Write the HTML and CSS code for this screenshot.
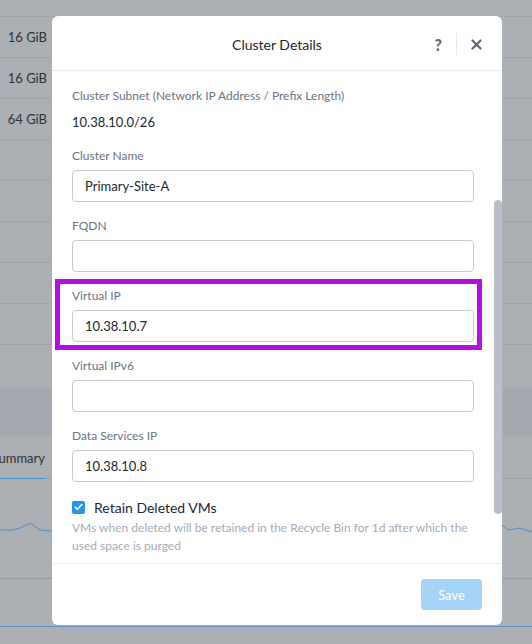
FILE: index.html
```html
<!DOCTYPE html>
<html>
<head>
<meta charset="utf-8">
<link rel="stylesheet" href="styles.css">
</head>
<body>
<div class="page">
  <div class="rows">
    <div class="row first">
      <span class="c-mem">1 GiB</span>
      <span class="c-use">12.75 GiB / 50 GiB</span>
      <span class="c-p1">30.37%</span>
      <span class="c-p2">33.32%</span>
    </div>
    <div class="row"><span class="c-mem">16 GiB</span></div>
    <div class="row"><span class="c-mem">16 GiB</span></div>
    <div class="row"><span class="c-mem">64 GiB</span></div>
    <div class="row"></div>
    <div class="row"></div>
    <div class="row"></div>
    <div class="row"></div>
    <div class="row"></div>
  </div>
  <div class="gap"></div>
  <div class="band"></div>
  <div class="tabs"><span class="tab">Summary</span></div>
  <div class="chart">
    <svg width="532" height="99" viewBox="0 0 532 99">
      <polyline points="0,51 13,51 20,49 30,44 40,51 52,52 300,52 496,44 502,46 508,51 520,49 532,53" fill="none" stroke="#4a8fcf" stroke-width="1"/>
    </svg>
  </div>
  <div class="line2"></div>
</div>

<div class="modal">
  <div class="m-head">
    <div class="m-title">Cluster Details</div>
    <div class="m-actions">
      <span class="m-help">?</span>
      <span class="m-sep"></span>
      <span class="m-close">
        <svg width="11" height="11" viewBox="0 0 11 11"><path d="M1.5 1.5 L9.5 9.5 M9.5 1.5 L1.5 9.5" stroke="#5d6979" stroke-width="2.2" stroke-linecap="round"/></svg>
      </span>
    </div>
  </div>
  <div class="m-body">
    <div class="content">
      <div class="field">
        <div class="label">Cluster Subnet (Network IP Address / Prefix Length)</div>
        <div class="static">10.38.10.0/26</div>
      </div>
      <div class="field">
        <div class="label">Cluster Name</div>
        <div class="input">Primary-Site-A</div>
      </div>
      <div class="field">
        <div class="label">FQDN</div>
        <div class="input"></div>
      </div>
      <div class="field hl">
        <div class="label">Virtual IP</div>
        <div class="input">10.38.10.7</div>
        <div class="highlight"></div>
      </div>
      <div class="field">
        <div class="label">Virtual IPv6</div>
        <div class="input"></div>
      </div>
      <div class="field">
        <div class="label">Data Services IP</div>
        <div class="input">10.38.10.8</div>
      </div>
      <div class="check-row">
        <span class="checkbox">
          <svg width="9" height="8" viewBox="0 0 9 8"><path d="M1.2 4.2 L3.4 6.3 L7.8 1.6" fill="none" stroke="#fff" stroke-width="1.6" stroke-linecap="round" stroke-linejoin="round"/></svg>
        </span>
        <span class="check-label">Retain Deleted VMs</span>
      </div>
      <div class="help">VMs when deleted will be retained in the Recycle Bin for 1d after which the used space is purged</div>
    </div>
    <div class="scrollbar"></div>
  </div>
  <div class="m-foot">
    <button class="save">Save</button>
  </div>
</div>
</body>
</html>
```

FILE: styles.css
```css
html, body {
  margin: 0;
  padding: 0;
}
body {
  width: 532px;
  height: 644px;
  overflow: hidden;
  background: #acafb4;
  font-family: "Lato", "Open Sans", sans-serif;
  color: #22272e;
  position: relative;
}
.page {
  margin-top: -24px;
}
.rows {
  display: flex;
  flex-direction: column;
}
.row {
  height: 40px;
  border-bottom: 1px solid #a2a5aa;
  position: relative;
  display: flex;
  align-items: center;
  font-size: 13px;
  color: #2d3137;
}
.row span {
  position: absolute;
}
.c-mem { right: 485px; }
.c-use { left: 120px; }
.c-p1 { left: 285px; }
.c-p2 { left: 390px; }
.first { align-items: flex-end; }
.first span { bottom: 14px; }
.gap {
  height: 42px;
}
.band {
  height: 50px;
  background: #a6a9af;
}
.tabs {
  height: 41px;
  border-bottom: 1px solid #a0a3a8;
  position: relative;
  font-size: 13px;
  color: #2d3137;
}
.tab {
  position: absolute;
  left: 0;
  right: 487px;
  bottom: -1px;
  height: 28px;
  border-bottom: 1px solid #4a8fcf;
  display: flex;
  justify-content: flex-end;
  align-items: flex-start;
}
.chart {
  height: 99px;
  border-bottom: 1px solid #989ba0;
}
.chart svg { display: block; }
.line2 {
  height: 47px;
  border-bottom: 1px solid #5d8fc0;
}

.modal {
  position: absolute;
  left: 52px;
  top: 16px;
  width: 450px;
  height: 609px;
  background: #fff;
  border-radius: 6px;
  display: flex;
  flex-direction: column;
  overflow: hidden;
}
.m-head {
  height: 54px;
  border-bottom: 1px solid #e9ebee;
  display: flex;
  align-items: center;
  justify-content: center;
  position: relative;
  flex: none;
}
.m-title {
  font-size: 14px;
  color: #22272e;
  margin-top: 2px;
}
.m-actions {
  position: absolute;
  right: 20px;
  top: 17px;
  display: flex;
  align-items: center;
  height: 22px;
}
.m-help {
  font-size: 16px;
  font-weight: 900;
  color: #5d6979;
  margin-right: 14px;
}
.m-sep {
  width: 1px;
  height: 22px;
  background: #e6e8eb;
  margin-right: 14px;
}
.m-close {
  display: flex;
  align-items: center;
}
.m-body {
  flex: 1;
  position: relative;
  overflow: hidden;
}
.content {
  padding: 18px 28px 0 20px;
}
.field {
  margin-bottom: 17px;
  position: relative;
}
.label {
  font-size: 12px;
  line-height: 14px;
  color: #6a7485;
  margin-bottom: 7px;
}
.static {
  font-size: 13px;
  line-height: 18px;
  margin-top: 10px;
  margin-bottom: 18px;
  color: #22272e;
}
.input {
  height: 30px;
  border: 1px solid #c5cad3;
  border-radius: 4px;
  padding: 0 12px;
  font-size: 13px;
  line-height: 30px;
  color: #22272e;
}
.highlight {
  position: absolute;
  left: -17px;
  right: -8px;
  top: -10px;
  bottom: -8px;
  border: 5px solid #b30ee4;
  pointer-events: none;
}
.check-row {
  display: flex;
  align-items: center;
  height: 16px;
}
.checkbox {
  width: 13px;
  height: 13px;
  border-radius: 2px;
  background: #2496ee;
  display: flex;
  align-items: center;
  justify-content: center;
  margin-right: 9px;
}
.check-label {
  font-size: 14px;
  color: #22272e;
}
.help {
  margin-top: 4px;
  font-size: 12px;
  line-height: 18px;
  color: #a4abb7;
}
.scrollbar {
  position: absolute;
  right: 0;
  top: 129px;
  width: 8px;
  height: 314px;
  border-radius: 4px;
  background: #b8bfcb;
}
.m-foot {
  height: 62px;
  border-top: 1px solid #eceef1;
  flex: none;
  display: flex;
  justify-content: flex-end;
  align-items: flex-start;
  padding: 15px 20px 0 0;
  box-sizing: border-box;
}
.save {
  width: 61px;
  height: 31px;
  border: none;
  border-radius: 4px;
  background: #a3d4f8;
  color: #fff;
  font-family: "Lato", "Open Sans", sans-serif;
  font-size: 13px;
  padding: 0;
}
```
